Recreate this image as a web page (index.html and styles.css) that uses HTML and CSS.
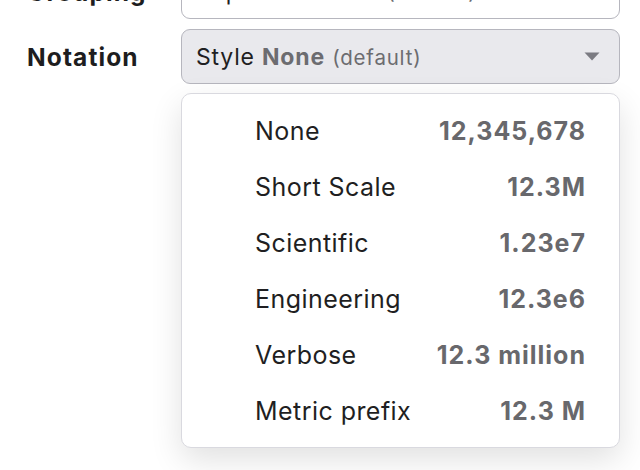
FILE: index.html
```html
<!DOCTYPE html>
<html>
<head>
<meta charset="utf-8">
<link rel="stylesheet" href="styles.css">
</head>
<body>
<div class="form">
  <div class="row">
    <div class="label">Grouping</div>
    <div class="field">Separators <b>Auto</b> <span class="muted">(default)</span></div>
  </div>
  <div class="row">
    <div class="label">Notation</div>
    <div class="control">
      <div class="field select">
        <span class="value">Style <b>None</b> <span class="muted">(default)</span></span>
        <svg class="arrow" width="16" height="9" viewBox="0 0 16 9"><path d="M0.5 0.5 H15.5 L8 8.5 Z" fill="#7b7b82"/></svg>
      </div>
      <div class="menu">
        <div class="item"><span>None</span><b>12,345,678</b></div>
        <div class="item"><span>Short Scale</span><b>12.3M</b></div>
        <div class="item"><span>Scientific</span><b>1.23e7</b></div>
        <div class="item"><span>Engineering</span><b>12.3e6</b></div>
        <div class="item"><span>Verbose</span><b>12.3 million</b></div>
        <div class="item"><span>Metric prefix</span><b>12.3 M</b></div>
      </div>
    </div>
  </div>
</div>
</body>
</html>
```
FILE: styles.css
```css
html, body {
  margin: 0;
  padding: 0;
  background: #ffffff;
}
body {
  font-family: Inter, "Noto Sans", sans-serif;
  color: #1f1f22;
  overflow: hidden;
  width: 640px;
  height: 470px;
}
.form {
  display: flex;
  flex-direction: column;
  gap: 10px;
  margin-top: -36px;
  padding: 0 20px 0 27px;
}
.row {
  display: grid;
  grid-template-columns: 154px 1fr;
  align-items: center;
}
.label {
  font-weight: 700;
  font-size: 24.5px;
  letter-spacing: 1.1px;
  color: #1d1d20;
}
.control {
  position: relative;
}
.field {
  box-sizing: border-box;
  height: 55px;
  border: 1.5px solid #b6b6be;
  border-radius: 9px;
  background: #fff;
  padding: 0 19px 0 14px;
  display: flex;
  align-items: center;
  font-size: 23px;
  letter-spacing: 0.8px;
  color: #1f1f22;
  white-space: pre;
}
.field b {
  font-weight: 700;
  color: #6c6c70;
}
.muted {
  color: #6c6c70;
  font-size: 20.5px;
  letter-spacing: 0.8px;
}
.select {
  background: #e9e9ed;
  justify-content: space-between;
}
.arrow {
  display: block;
}
.menu {
  position: absolute;
  left: 0;
  right: 0;
  top: 64px;
  box-sizing: border-box;
  height: 355px;
  background: #fff;
  border: 1.5px solid #d9d9df;
  border-radius: 10px;
  box-shadow: 0 12px 32px rgba(0, 0, 0, 0.12);
  padding: 9px 34px 0 73px;
  display: flex;
  flex-direction: column;
}
.item {
  height: 56px;
  display: flex;
  align-items: center;
  justify-content: space-between;
  font-size: 25px;
  letter-spacing: 0.45px;
  color: #1f1f22;
}
.item b {
  font-weight: 700;
  letter-spacing: 1px;
  color: #68686c;
  margin-right: -1px;
}
```
